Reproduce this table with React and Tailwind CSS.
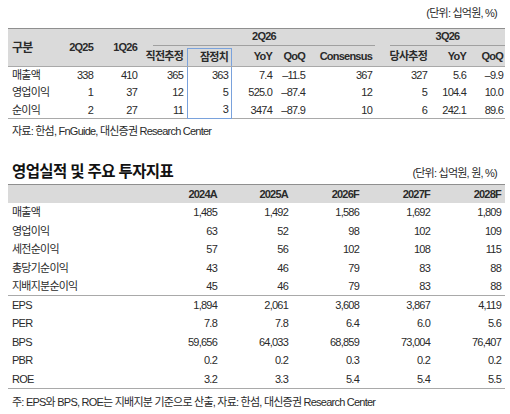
import React from "react";

const topRows = [
  ["매출액", "338", "410", "365", "363", "7.4", "–11.5", "367", "327", "5.6", "–9.9"],
  ["영업이익", "1", "37", "12", "5", "525.0", "–87.4", "12", "5", "104.4", "10.0"],
  ["순이익", "2", "27", "11", "3", "3474", "–87.9", "10", "6", "242.1", "89.6"],
];

const years = ["2024A", "2025A", "2026F", "2027F", "2028F"];

const bottomRows = [
  ["매출액", "1,485", "1,492", "1,586", "1,692", "1,809"],
  ["영업이익", "63", "52", "98", "102", "109"],
  ["세전순이익", "57", "56", "102", "108", "115"],
  ["총당기순이익", "43", "46", "79", "83", "88"],
  ["지배지분순이익", "45", "46", "79", "83", "88"],
  ["EPS", "1,894", "2,061", "3,608", "3,867", "4,119"],
  ["PER", "7.8", "7.8", "6.4", "6.0", "5.6"],
  ["BPS", "59,656", "64,033", "68,859", "73,004", "76,407"],
  ["PBR", "0.2", "0.2", "0.3", "0.2", "0.2"],
  ["ROE", "3.2", "3.3", "5.4", "5.4", "5.5"],
];

const topCols = "grid grid-cols-[44px_45px_44px_46px_45px_44px_33px_67px_55px_39px_35px]";
const botCols = "grid grid-cols-[141px_71px_71px_71px_71px_71px]";

export default function App() {
  return (
    <div className="w-[510px] h-[414px] bg-white pl-2 pr-[5px] text-[11px] tracking-[-0.07em] text-[#2a2a2a] font-['Liberation_Sans','Noto_Sans_CJK_KR',sans-serif]">
      {/* 잠정실적 표 */}
      <div className="pt-[6px] mb-[8px] leading-[14px] text-right pr-2">(단위: 십억원, %)</div>

      <div className={`${topCols} grid-rows-[17px_20px] bg-[#dadada] border-t-[1.5px] border-b border-t-[#8f8f8f] border-b-[#a9a9a9] font-bold`}>
        <div className="row-span-2 flex items-center pl-1 text-[12px]">구분</div>
        <div className="row-span-2 flex items-center justify-end pr-1">2Q25</div>
        <div className="row-span-2 flex items-center justify-end pr-1">1Q26</div>
        <div className="col-span-5 ml-3 mr-px border-b border-[#a0a0a0] flex items-end justify-center pb-px">2Q26</div>
        <div className="col-span-3 ml-[14px] border-b border-[#a0a0a0] flex items-end justify-center pb-px">3Q26</div>
        <div className="flex items-center justify-end pr-1">직전추정</div>
        <div className="mt-[2px] border-x-[1.5px] border-t-[1.5px] border-[#7aa2dc] flex items-center justify-end pr-[3px]">잠정치</div>
        <div className="flex items-center justify-end pr-1">YoY</div>
        <div className="flex items-center justify-end pr-1">QoQ</div>
        <div className="flex items-center justify-end pr-1">Consensus</div>
        <div className="flex items-center justify-end pr-1">당사추정</div>
        <div className="flex items-center justify-end pr-1">YoY</div>
        <div className="flex items-center justify-end pr-[2px]">QoQ</div>
      </div>

      <div className="border-b border-[#a9a9a9]">
        {topRows.map((row, r) => (
          <div key={r} className={`${topCols} h-[17px]`}>
            {row.map((cell, i) => (
              <div
                key={i}
                className={
                  i === 0
                    ? "flex items-center pl-1"
                    : i === 4
                    ? `flex items-center justify-end pr-[3px] border-x-[1.5px] border-[#7aa2dc] ${r === 2 ? "border-b-[1.5px]" : ""}`
                    : `flex items-center justify-end ${i === 10 ? "pr-[2px]" : "pr-1"}`
                }
              >
                {cell}
              </div>
            ))}
          </div>
        ))}
      </div>

      <div className="mt-[5px] leading-[14px] pl-1">자료: 한섬, FnGuide, 대신증권 Research Center</div>

      {/* 영업실적 및 주요 투자지표 */}
      <div className="mt-[25px] mb-[3px] flex items-end justify-between">
        <div className="pl-1 text-[15.5px] leading-[18px] font-bold tracking-[-0.04em] text-[#111]">영업실적 및 주요 투자지표</div>
        <div className="pr-2 leading-[14px] pb-[1px]">(단위: 십억원, 원, %)</div>
      </div>

      <div className={`${botCols} h-[19px] bg-[#dadada] border-t-[1.5px] border-[#8f8f8f] font-bold`}>
        <div />
        {years.map((y) => (
          <div key={y} className="flex items-center justify-end pr-[3px]">{y}</div>
        ))}
      </div>

      <div className="border-b border-[#a9a9a9]">
        {bottomRows.map((row, r) => (
          <div key={r} className={`${botCols} h-[18.5px] ${r === 4 ? "border-b border-[#a9a9a9]" : ""}`}>
            {row.map((cell, i) => (
              <div key={i} className={i === 0 ? "flex items-center pl-1" : "flex items-center justify-end pr-[3px]"}>
                {cell}
              </div>
            ))}
          </div>
        ))}
      </div>

      <div className="mt-[6px] leading-[14px] pl-1">주: EPS와 BPS, ROE는 지배지분 기준으로 산출, 자료: 한섬, 대신증권 Research Center</div>
    </div>
  );
}
